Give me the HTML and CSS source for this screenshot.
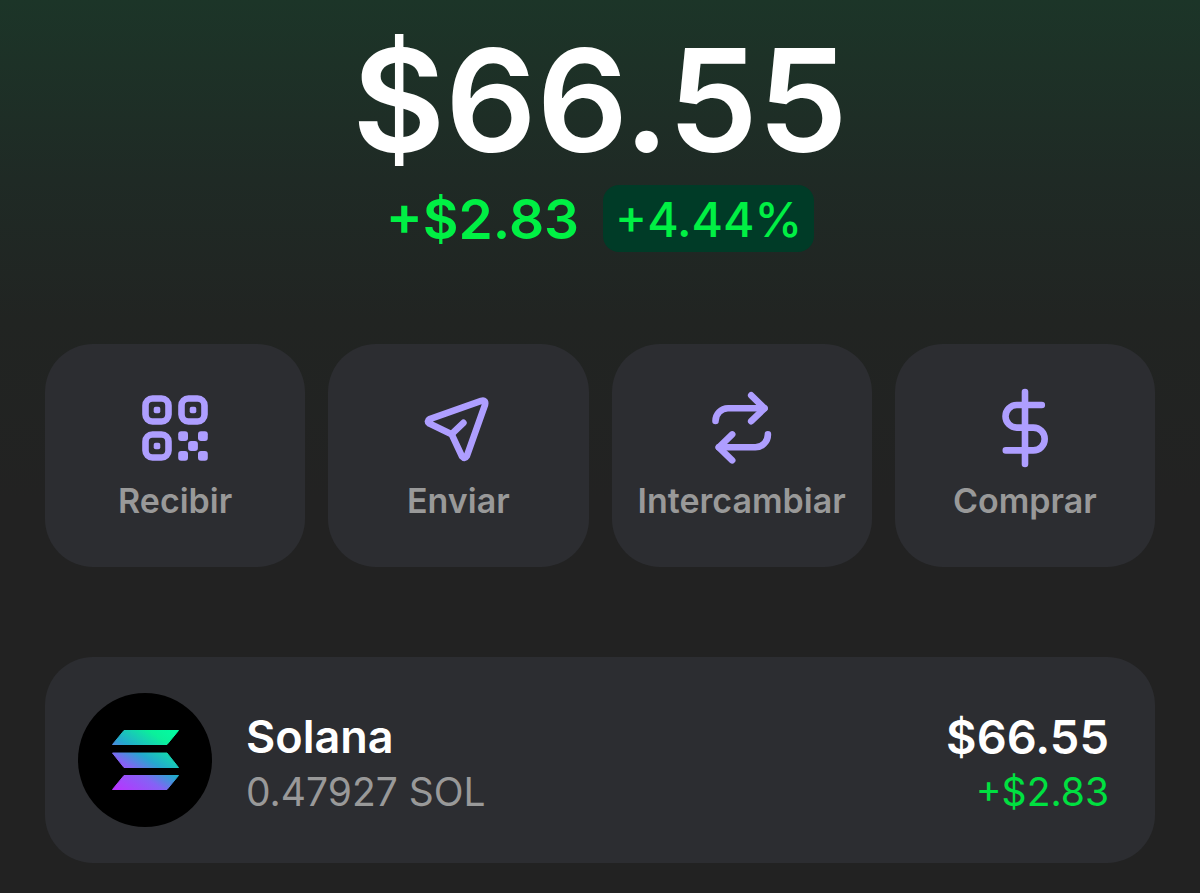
FILE: index.html
```html
<!DOCTYPE html>
<html lang="es">
<head>
	<meta charset="UTF-8">
	<meta name="viewport" content="width=device-width, initial-scale=1">
	<title>Cartera</title>
	<link rel="stylesheet" href="styles.css">
</head>
<body>

	<main id="cartera">

		<!-- Saldo total -->
		<section class="saldo">
			<h1>$66.55</h1>
			<div class="cambio">
				<span class="cantidad">+$2.83</span>
				<span class="porcentaje">+4.44%</span>
			</div>
		</section>

		<!-- Acciones -->
		<div class="acciones">
			<button type="button" class="accion">
				<svg class="icono" viewBox="0 0 80 80" aria-hidden="true">
					<g fill="none" stroke="currentColor" stroke-width="6.6">
						<rect x="10.5" y="10.5" width="23" height="23" rx="7"/>
						<rect x="46.5" y="10.5" width="23" height="23" rx="7"/>
						<rect x="10.5" y="46.5" width="23" height="23" rx="7"/>
					</g>
					<g fill="currentColor">
						<rect x="18.7" y="18.7" width="6.6" height="6.6" rx="2"/>
						<rect x="54.7" y="18.7" width="6.6" height="6.6" rx="2"/>
						<rect x="18.7" y="54.7" width="6.6" height="6.6" rx="2"/>
						<rect x="43.2" y="43.2" width="9.8" height="9.8" rx="3"/>
						<rect x="63" y="43.2" width="9.8" height="9.8" rx="3"/>
						<rect x="53.1" y="53.1" width="9.8" height="9.8" rx="3"/>
						<rect x="43.2" y="63" width="9.8" height="9.8" rx="3"/>
						<rect x="63" y="63" width="9.8" height="9.8" rx="3"/>
					</g>
				</svg>
				<span>Recibir</span>
			</button>
			<button type="button" class="accion">
				<svg class="icono trazo" viewBox="0 0 80 80" aria-hidden="true">
					<path d="M11.6 31.2L63.2 12.9Q68.2 11.6 67 16.8L48.8 68.2Q46.8 71.6 44 68.4L33.6 46.2L11.4 35.6Q8.2 33.2 11.6 31.2Z"/>
					<path d="M33.6 46.2L45.4 34.8"/>
				</svg>
				<span>Enviar</span>
			</button>
			<button type="button" class="accion">
				<svg class="icono trazo" viewBox="0 0 80 80" aria-hidden="true">
					<path d="M13.5 33A12.5 12.7 0 0 1 26 20.3H62.5"/>
					<path d="M49.2 7.3L62.5 20.3L49.2 33.2"/>
					<path d="M65.9 46.4A12.5 12.9 0 0 1 53.4 59.3H16.8"/>
					<path d="M30.2 46.4L16.8 59.3L30.2 72.3"/>
				</svg>
				<span>Intercambiar</span>
			</button>
			<button type="button" class="accion">
				<svg class="icono trazo" viewBox="0 0 80 80" aria-hidden="true">
					<path d="M40 4.1V76"/>
					<path d="M56.8 17H31.8a11.3 11.3 0 0 0 0 22.6H48.3a11.4 11.4 0 0 1 0 22.8H20.8"/>
				</svg>
				<span>Comprar</span>
			</button>
		</div>

		<!-- Lista de tokens -->
		<a class="token" href="#solana">
			<svg class="logo" viewBox="0 0 134 134" aria-hidden="true">
				<defs>
					<linearGradient id="sol" gradientUnits="userSpaceOnUse" x1="94" y1="30" x2="46" y2="102">
						<stop offset="0" stop-color="#00ffa3"/>
						<stop offset="0.22" stop-color="#0af09b"/>
						<stop offset="0.5" stop-color="#25a8cf"/>
						<stop offset="0.7" stop-color="#8562f5"/>
						<stop offset="1" stop-color="#b834ff"/>
					</linearGradient>
				</defs>
				<circle cx="67" cy="67" r="67" fill="#000"/>
				<g fill="url(#sol)" stroke="url(#sol)" stroke-width="1" stroke-linejoin="round">
					<path d="M46 37.5H100.5L89 51.5H34.5Z"/>
					<path d="M34.5 60H89L100.5 74.5H46Z"/>
					<path d="M46 82.5H100.5L89 96.5H34.5Z"/>
				</g>
			</svg>
			<div class="datos">
				<div class="principal">Solana</div>
				<div class="detalle">0.47927 SOL</div>
			</div>
			<div class="datos valor">
				<div class="principal precio">$66.55</div>
				<div class="detalle sube">+$2.83</div>
			</div>
		</a>

	</main>

</body>
</html>
```
FILE: styles.css
```css
* {
	box-sizing: border-box;
}

body {
	margin: 0;
	min-height: 100vh;
	font-family: Inter, "Liberation Sans", sans-serif;
	color: #ffffff;
	background: #222222 linear-gradient(#1c3528 0px, #1f2a25 180px, #212422 320px, #222222 500px) no-repeat;
}

#cartera {
	padding: 28px 45px 30px;
}

/* Saldo */
.saldo {
	display: flex;
	flex-direction: column;
	align-items: center;
}

h1 {
	margin: 0;
	font-size: 143px;
	line-height: 144px;
	font-weight: 600;
}

.cambio {
	display: flex;
	align-items: center;
	gap: 24px;
	margin-top: 13px;
	color: #00f044;
	line-height: 65px;
}

.cantidad {
	padding-top: 2px;
	font-size: 55px;
	font-weight: 600;
}

.porcentaje {
	padding: 2px 12px 0;
	border-radius: 16px;
	background-color: #003b27;
	font-size: 48px;
	font-weight: 500;
}

/* Botones de acciones */
.acciones {
	display: grid;
	grid-template-columns: repeat(4, 1fr);
	gap: 23px;
	margin-top: 92px;
}

.accion {
	display: flex;
	flex-direction: column;
	align-items: center;
	gap: 13px;
	padding: 44px 0 46px;
	border: 0;
	border-radius: 48px;
	background-color: #2c2d31;
	color: #999999;
	font-family: inherit;
	font-size: 34px;
	line-height: 40px;
	font-weight: 600;
	cursor: pointer;
}

.icono {
	width: 80px;
	height: 80px;
	color: #ae9eff;
}

.trazo {
	fill: none;
	stroke: currentColor;
	stroke-width: 6.6;
	stroke-linecap: round;
	stroke-linejoin: round;
}

/* Token */
.token {
	display: flex;
	align-items: center;
	gap: 34px;
	margin-top: 90px;
	padding: 36px 46px 36px 33px;
	border-radius: 48px;
	background-color: #2c2d31;
	color: #ffffff;
	text-decoration: none;
}

.logo {
	width: 134px;
	height: 134px;
}

.datos {
	padding-top: 7px;
}

.valor {
	margin-left: auto;
	text-align: right;
}

.principal {
	font-size: 45px;
	line-height: 55px;
	font-weight: 600;
}

.precio {
	font-size: 47px;
}

.detalle {
	font-size: 39px;
	line-height: 55px;
	color: #999999;
}

.sube {
	color: #00e040;
}
```
